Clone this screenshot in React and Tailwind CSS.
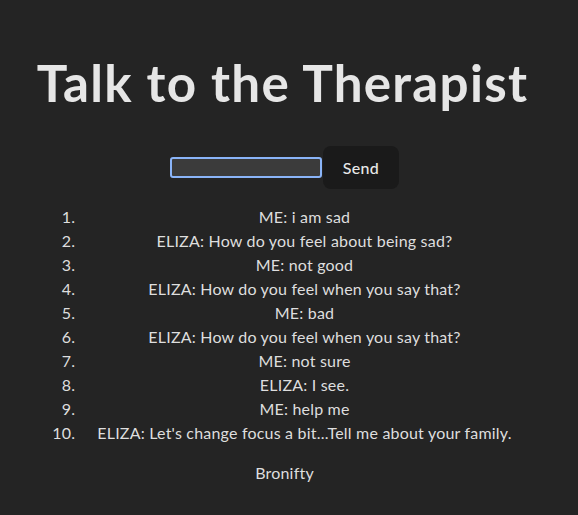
export default function App() {
  const items = [
    "ME: i am sad",
    "ELIZA: How do you feel about being sad?",
    "ME: not good",
    "ELIZA: How do you feel when you say that?",
    "ME: bad",
    "ELIZA: How do you feel when you say that?",
    "ME: not sure",
    "ELIZA: I see.",
    "ME: help me",
    "ELIZA: Let's change focus a bit...Tell me about your family.",
  ];
  return (
    <div className="min-h-[515px] bg-[#242424] text-[#dedede] font-['Lato',sans-serif] text-[16px] leading-[1.5] flex justify-center pr-[9px]">
      <div className="w-[490px] pt-[54px] text-center">
        <h1 className="text-[51.2px] leading-[1.1] font-bold tracking-[1.25px] text-[#e6e6e6] whitespace-nowrap -ml-[4px]">Talk to the Therapist</h1>
        <div className="mt-[36px] flex justify-center items-center">
          <input className="w-[152px] h-[21px] bg-[#3b3b3b] border-2 border-[#8ab4f8] rounded-[3px] outline-none" />
          <button className="ml-[1px] h-[43px] px-[20px] rounded-[8px] bg-[#1a1a1a] text-[#e8e8e8] font-medium tracking-[0.3px]">Send</button>
        </div>
        <ol className="mt-[16px] pl-[40px] list-decimal text-center tracking-[0.2px]">
          {items.map((t, i) => (
            <li key={i}>{t}</li>
          ))}
        </ol>
        <p className="mt-[16px] tracking-[0.2px]">Bronifty</p>
      </div>
    </div>
  );
}
